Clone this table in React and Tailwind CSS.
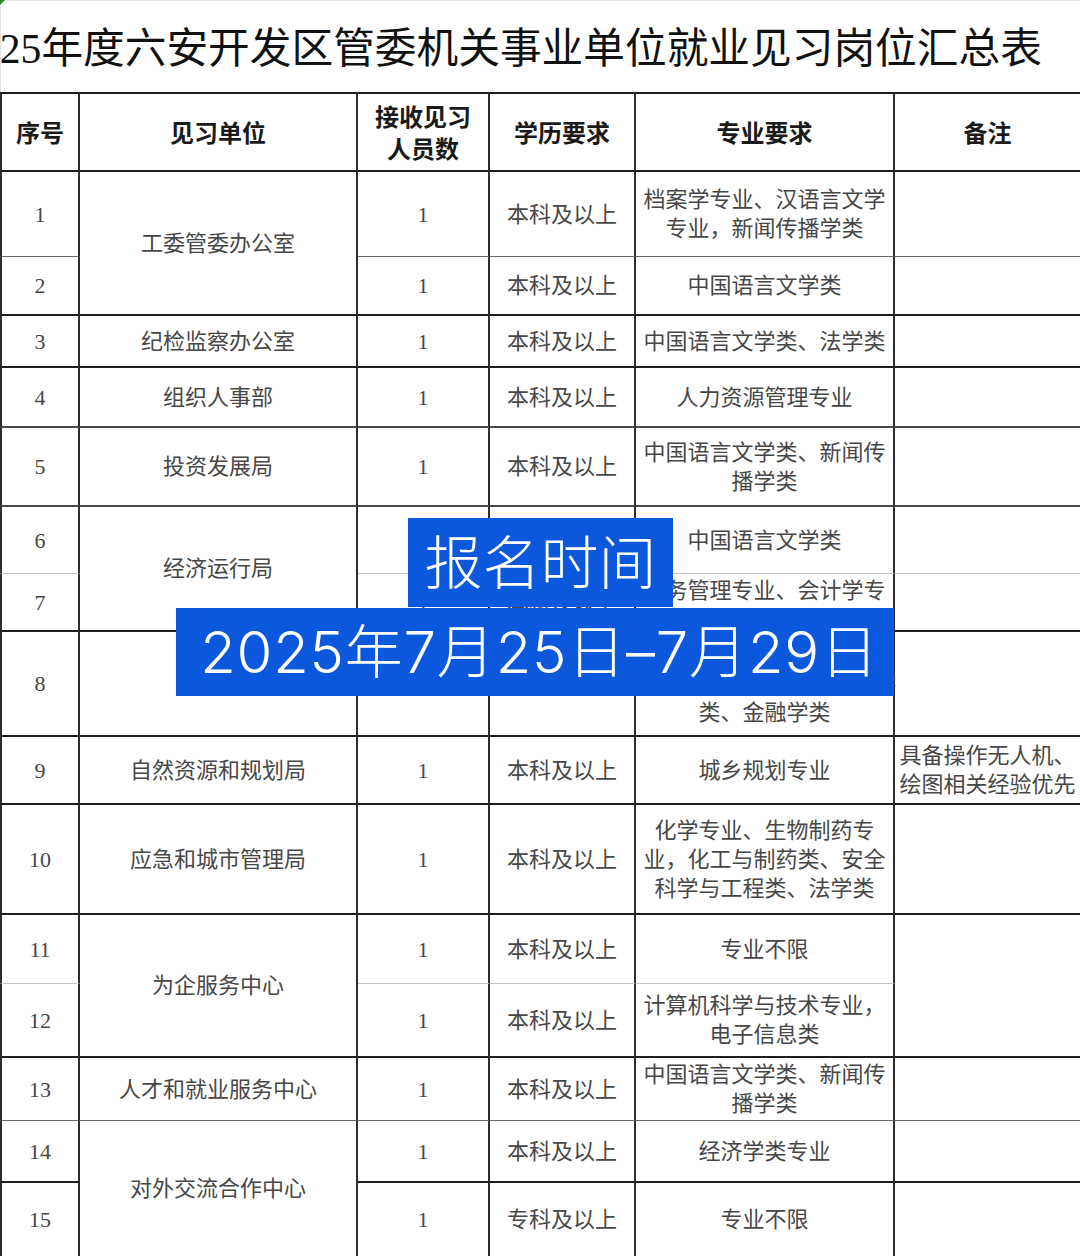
import React from "react";

const BOTTOM = {
  D: "border-b-2 border-b-[#1f1f1f]",
  M: "border-b-2 border-b-[#4a4a4a]",
  G: "border-b border-b-[#6a6a6a]",
  L: "border-b border-b-[#c4c4c4]",
  N: "",
};

const RIGHT = [
  "border-l-2 border-l-[#2e2e2e] border-r-2 border-r-[#2e2e2e]",
  "border-r-2 border-r-[#2e2e2e]",
  "border-r-2 border-r-[#2e2e2e]",
  "border-r-2 border-r-[#2e2e2e]",
  "border-r-2 border-r-[#2e2e2e]",
  "",
];

const rows = [
  { n: "1", b: "G", unit: { t: ["工委管委办公室"], span: true, b: "D" }, c: "1", e: "本科及以上", m: ["档案学专业、汉语言文学", "专业，新闻传播学类"], note: { t: [] } },
  { n: "2", b: "D", c: "1", e: "本科及以上", m: ["中国语言文学类"], note: { t: [] } },
  { n: "3", b: "D", unit: { t: ["纪检监察办公室"] }, c: "1", e: "本科及以上", m: ["中国语言文学类、法学类"], note: { t: [] } },
  { n: "4", b: "M", unit: { t: ["组织人事部"] }, c: "1", e: "本科及以上", m: ["人力资源管理专业"], note: { t: [] } },
  { n: "5", b: "M", unit: { t: ["投资发展局"] }, c: "1", e: "本科及以上", m: ["中国语言文学类、新闻传", "播学类"], note: { t: [] } },
  { n: "6", b: "L", unit: { t: ["经济运行局"], span: true, b: "D" }, c: "1", e: "本科及以上", m: ["中国语言文学类"], note: { t: [] } },
  { n: "7", b: "D", c: "1", e: "本科及以上", m: ["财务管理专业、会计学专", "业"], mx: "pt-[5px]", note: { t: [] } },
  { n: "8", b: "D", unit: { t: ["财政局"] }, c: "1", e: "本科及以上", m: ["经济学类、财政学类、会", "计学类、审计学类、统计学", "类、金融学类"], note: { t: [] } },
  { n: "9", b: "D", unit: { t: ["自然资源和规划局"] }, c: "1", e: "本科及以上", m: ["城乡规划专业"], note: { t: ["具备操作无人机、", "绘图相关经验优先"] } },
  { n: "10", b: "D", unit: { t: ["应急和城市管理局"] }, c: "1", e: "本科及以上", m: ["化学专业、生物制药专", "业，化工与制药类、安全", "科学与工程类、法学类"], note: { t: [] } },
  { n: "11", b: "L", unit: { t: ["为企服务中心"], span: true, b: "D" }, c: "1", e: "本科及以上", m: ["专业不限"], note: { t: [], span: true, b: "D" } },
  { n: "12", b: "D", c: "1", e: "本科及以上", m: ["计算机科学与技术专业，", "电子信息类"] },
  { n: "13", b: "G", unit: { t: ["人才和就业服务中心"] }, c: "1", e: "本科及以上", m: ["中国语言文学类、新闻传", "播学类"], note: { t: [] } },
  { n: "14", b: "D", unit: { t: ["对外交流合作中心"], span: true, b: "N" }, c: "1", e: "本科及以上", m: ["经济学类专业"], note: { t: [] } },
  { n: "15", b: "N", c: "1", e: "专科及以上", m: ["专业不限"], note: { t: [] } },
];

function Cell({ col, b, span, lines, head, extra = "" }) {
  return (
    <div
      className={`flex flex-col items-center justify-center text-center whitespace-nowrap ${RIGHT[col]} ${BOTTOM[b]} ${span ? "row-span-2" : ""} ${extra} ${
        head
          ? "border-t-2 border-t-[#1f1f1f] text-[24px] font-bold leading-[32px] text-[#1a1a1a] font-['Noto_Sans_CJK_SC',sans-serif]"
          : "text-[22px] leading-[29px] text-[#474747] font-['Liberation_Serif','Noto_Sans_CJK_SC',serif]"
      }`}
    >
      {lines.map((l, i) => (
        <div key={i}>{l}</div>
      ))}
    </div>
  );
}

export default function App() {
  const cells = [];
  const heads = [["序号"], ["见习单位"], ["接收见习", "人员数"], ["学历要求"], ["专业要求"], ["备注"]];
  heads.forEach((h, i) => cells.push(<Cell key={`h${i}`} col={i} b="D" lines={h} head />));
  rows.forEach((r, ri) => {
    cells.push(<Cell key={`${ri}n`} col={0} b={r.b} lines={[r.n]} />);
    if (r.unit) cells.push(<Cell key={`${ri}u`} col={1} b={r.unit.span ? r.unit.b : r.b} span={r.unit.span} lines={r.unit.t} />);
    cells.push(<Cell key={`${ri}c`} col={2} b={r.b} lines={[r.c]} />);
    cells.push(<Cell key={`${ri}e`} col={3} b={r.b} lines={[r.e]} />);
    cells.push(<Cell key={`${ri}m`} col={4} b={r.b} lines={r.m} extra={r.mx || ""} />);
    if (r.note) cells.push(<Cell key={`${ri}o`} col={5} b={r.note.span ? r.note.b : r.b} span={r.note.span} lines={r.note.t} />);
  });

  return (
    <div className="relative w-[1080px] h-[1256px] overflow-hidden bg-white">
      <div className="h-[92px] flex items-center pt-[6px] overflow-hidden border-t border-t-[#e2e2e2] border-l border-l-[#e2e2e2]">
        <div className="ml-[-43px] whitespace-nowrap text-[41.7px] leading-none text-[#111] font-['Liberation_Serif','Noto_Sans_CJK_SC',serif]">
          2025年度六安开发区管委机关事业单位就业见习岗位汇总表
        </div>
      </div>
      <div className="absolute left-0 top-0 w-0 h-0 border-t-[5px] border-t-[#2a8a2a] border-r-[5px] border-r-transparent" />
      <div className="grid grid-cols-[80px_278px_132px_146px_259px_185px] grid-rows-[80px_85px_59px_52px_60px_79px_67px_58px_105px_68px_110px_69px_74px_63px_62px_73px]">
        {cells}
      </div>

      <div className="absolute left-[408px] top-[518px] w-[265px] h-[89px] bg-[#0b58dd] flex items-center justify-center text-white text-[58px] leading-none font-light font-['Inter','Noto_Sans_CJK_SC',sans-serif]">
        报名时间
      </div>
      <div className="absolute left-[176px] top-[608px] w-[718px] h-[88px] pl-[9px] bg-[#0b58dd] flex items-center justify-center text-white text-[58px] leading-none tracking-[0.8px] font-light font-['Inter','Noto_Sans_CJK_SC',sans-serif]">
        2025年7月25日–7月29日
      </div>
    </div>
  );
}
